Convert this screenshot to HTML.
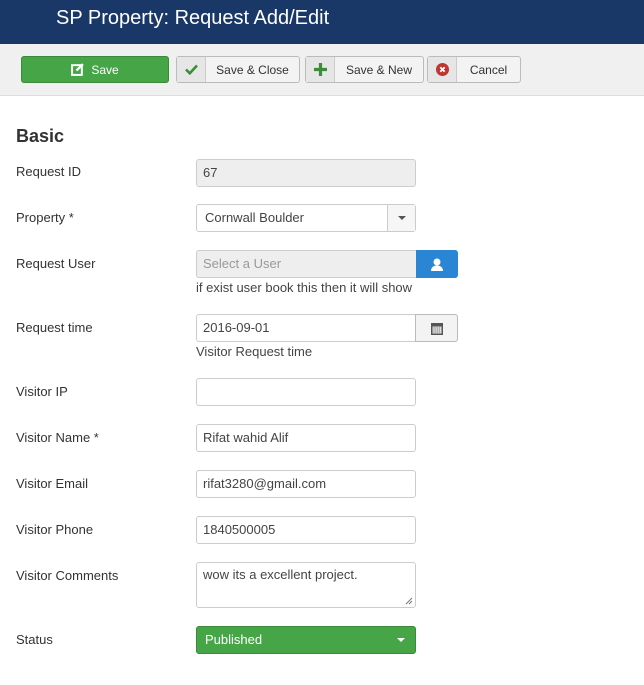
<!DOCTYPE html>
<html><head><meta charset="utf-8"><style>
*{box-sizing:border-box}
body{margin:0;width:644px;height:685px;background:#fff;font-family:"Liberation Sans",Arial,sans-serif;font-size:13px;color:#333;position:relative;overflow:hidden}
.hdr{position:absolute;left:0;top:0;width:644px;height:44px;background:#1a3867;color:#fff;font-size:20px;padding:7px 0 0 56px}
.tb{position:absolute;left:0;top:44px;width:644px;height:52px;background:#f0f0f0;border-bottom:1px solid #ddd}
.btn{position:absolute;top:12px;height:27px;border:1px solid #bbb;border-radius:3px;background:#f3f3f3;font-size:12px;color:#333;display:flex;align-items:center}
.btn .ic{width:29px;height:100%;border-right:1px solid #ccc;background:#e6e6e6;display:flex;align-items:center;justify-content:center}
.btn .t{flex:1;text-align:center}
.lbl{position:absolute;left:16px;font-size:13px}
.in{position:absolute;left:196px;width:220px;height:28px;border:1px solid #ccc;border-radius:3px;background:#fff;padding:0 6px;line-height:26px;font-size:13px;color:#444}
.help{position:absolute;left:196px;font-size:13px;color:#444}
</style></head><body>
<div class="hdr">SP Property: Request Add/Edit</div>
<div class="tb">
<div class="btn" style="left:21px;width:148px;background:#46a546;border-color:#3a8a3a;color:#fff;justify-content:center">
<svg width="13" height="13" viewBox="0 0 12 12" style="margin-right:7px"><rect x="1" y="2" width="9" height="9" fill="none" stroke="#fff" stroke-width="1.8"/><path d="M5 7l6-6" stroke="#fff" stroke-width="2.2"/></svg>Save</div>
<div class="btn" style="left:176px;width:124px"><div class="ic"><svg width="13" height="11"><path d="M1 5.5l3.8 3.8L12 1.5" fill="none" stroke="#3c8c3c" stroke-width="2.6"/></svg></div><div class="t">Save &amp; Close</div></div>
<div class="btn" style="left:305px;width:119px"><div class="ic"><svg width="13" height="13"><path d="M6.5 0v13M0 6.5h13" stroke="#3c8c3c" stroke-width="3.2"/></svg></div><div class="t">Save &amp; New</div></div>
<div class="btn" style="left:427px;width:94px"><div class="ic"><svg width="13" height="13"><circle cx="6.5" cy="6.5" r="6.5" fill="#bd362f"/><path d="M4.3 4.3l4.4 4.4M8.7 4.3l-4.4 4.4" stroke="#fff" stroke-width="1.8"/></svg></div><div class="t">Cancel</div></div>
</div>
<div style="position:absolute;left:16px;top:126px;font-size:18px;font-weight:bold">Basic</div>
<div class="lbl" style="top:164px">Request ID</div>
<div class="in" style="top:159px;background:#eee">67</div>
<div class="lbl" style="top:210px">Property *</div>
<div class="in" style="top:204px;padding-left:8px">Cornwall Boulder<div style="position:absolute;right:0;top:0;width:28px;height:26px;border-left:1px solid #ccc;background:#f6f6f6"><div style="position:absolute;left:10px;top:11px;border:4px solid transparent;border-top:4px solid #555;border-bottom:0"></div></div></div>
<div class="lbl" style="top:256px">Request User</div>
<div class="in" style="top:250px;width:221px;background:#eee;color:#999;border-radius:3px 0 0 3px">Select a User</div>
<div style="position:absolute;left:416px;top:250px;width:42px;height:28px;background:#2a85d4;border-radius:0 3px 3px 0;display:flex;align-items:center;justify-content:center"><svg width="12" height="13"><circle cx="6" cy="4" r="3.5" fill="#fff"/><path d="M0 13c0-4 3-5.5 6-5.5s6 1.5 6 5.5z" fill="#fff"/></svg></div>
<div class="help" style="top:280px">if exist user book this then it will show</div>
<div class="lbl" style="top:320px">Request time</div>
<div class="in" style="top:314px;width:220px;border-radius:3px 0 0 3px">2016-09-01</div>
<div style="position:absolute;left:415px;top:314px;width:43px;height:28px;border:1px solid #bbb;background:#f3f3f3;border-radius:0 3px 3px 0;display:flex;align-items:center;justify-content:center"><svg width="12" height="13"><rect x="0" y="1" width="12" height="12" fill="#555"/><rect x="1.5" y="4.5" width="9" height="7" fill="#ddd"/><path d="M2.5 6h7M2.5 8h7M2.5 10h7" stroke="#777" stroke-width="0.9" stroke-dasharray="1 0.8"/></svg></div>
<div class="help" style="top:344px">Visitor Request time</div>
<div class="lbl" style="top:384px">Visitor IP</div>
<div class="in" style="top:378px"></div>
<div class="lbl" style="top:430px">Visitor Name *</div>
<div class="in" style="top:424px">Rifat wahid Alif</div>
<div class="lbl" style="top:476px">Visitor Email</div>
<div class="in" style="top:470px">rifat3280@gmail.com</div>
<div class="lbl" style="top:522px">Visitor Phone</div>
<div class="in" style="top:516px">1840500005</div>
<div class="lbl" style="top:568px">Visitor Comments</div>
<div class="in" style="top:562px;height:46px;line-height:24px">wow its a excellent project.<svg width="8" height="8" style="position:absolute;right:2px;bottom:2px"><path d="M7 1L1 7M7 4L4 7" stroke="#777"/></svg></div>
<div class="lbl" style="top:632px">Status</div>
<div class="in" style="top:626px;background:#46a546;border-color:#3a8a3a;color:#fff;padding-left:8px">Published<div style="position:absolute;right:10px;top:11px;border:4px solid transparent;border-top:4px solid #fff;border-bottom:0"></div></div>
</body></html>
